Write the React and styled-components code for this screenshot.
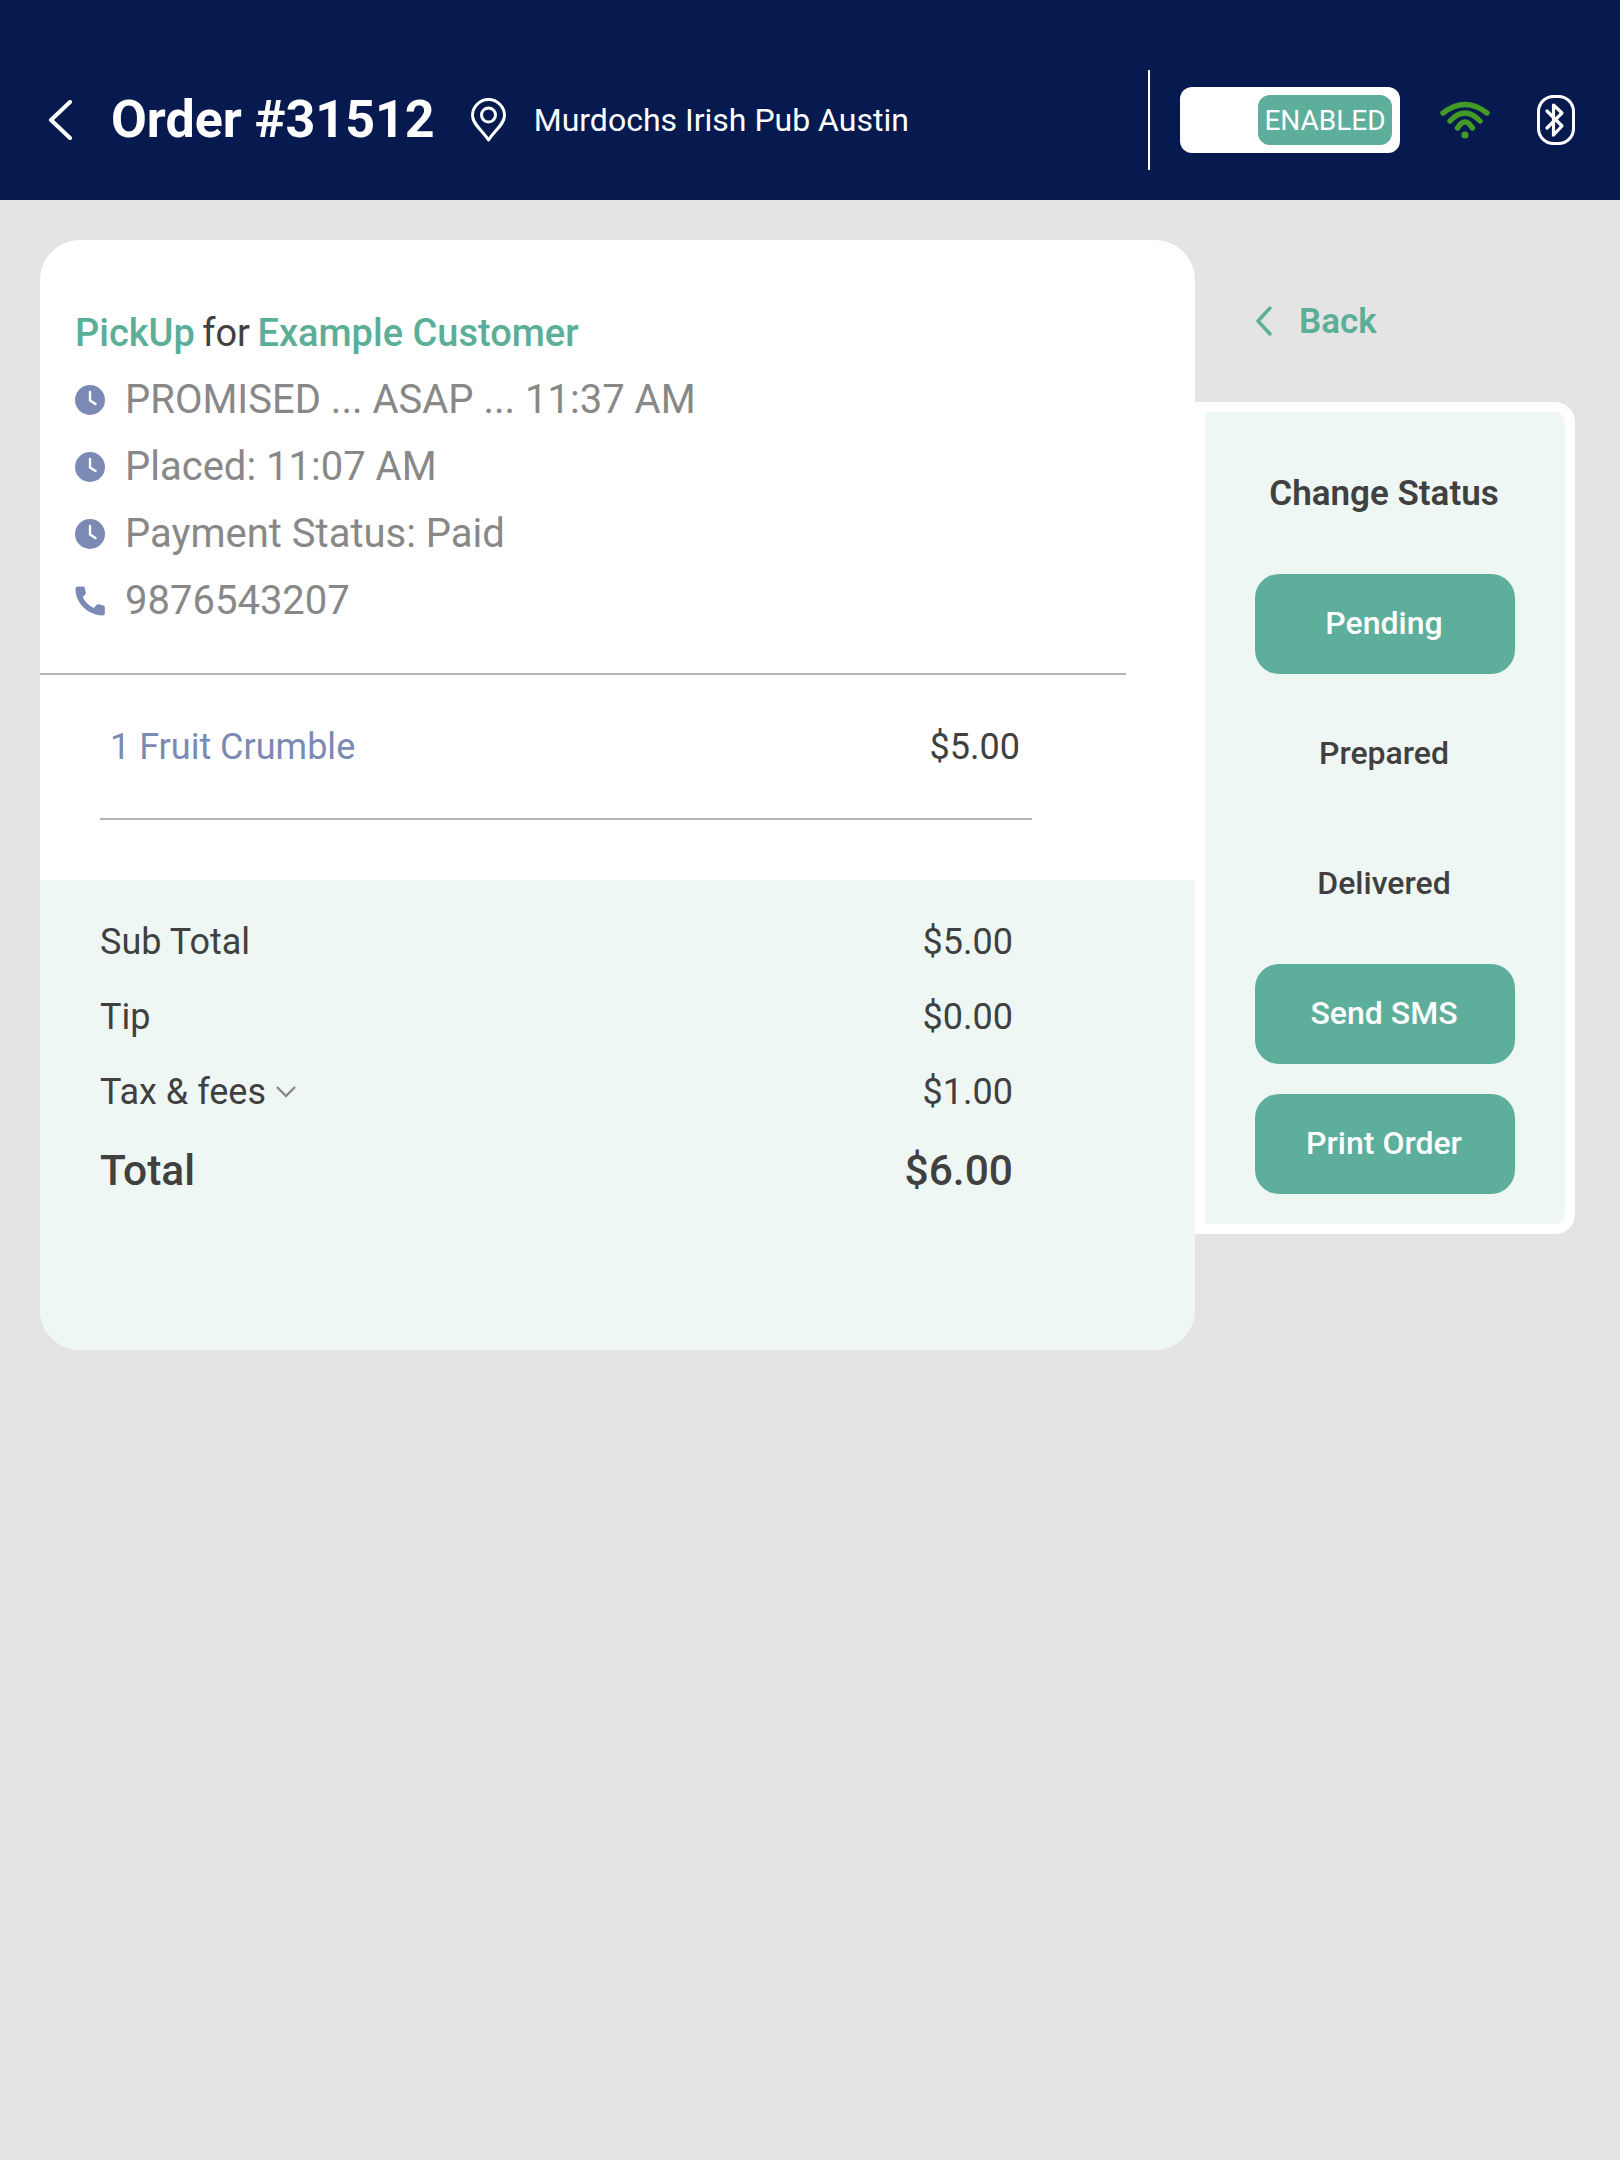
import React from "react";
import styled, { createGlobalStyle } from "styled-components";

const GlobalStyle = createGlobalStyle`
  html, body {
    margin: 0;
    padding: 0;
    background: #e4e4e4;
    font-family: Roboto, "Liberation Sans", sans-serif;
  }
  * {
    box-sizing: border-box;
  }
`;

const Page = styled.div`
  width: 1620px;
  min-height: 2160px;
  background: #e4e4e4;
`;

// Header
const Header = styled.header`
  height: 200px;
  background: #061a4f;
  color: #fff;
  display: flex;
  align-items: flex-end;
  padding: 0 45px 30px 48px;
`;

const HeaderLeft = styled.div`
  flex: 1;
  height: 100px;
  display: flex;
  align-items: center;
`;

const BackArrow = styled.svg`
  width: 26px;
  height: 40px;
  margin-right: 37px;
`;

const Title = styled.h1`
  margin: 0 36px 0 0;
  font-size: 52px;
  font-weight: 700;
  line-height: 1;
`;

const Pin = styled.svg`
  width: 35px;
  height: 44px;
  margin-right: 28px;
`;

const Location = styled.span`
  font-size: 32px;
  font-weight: 400;
`;

const HeaderRight = styled.div`
  height: 100px;
  display: flex;
  align-items: center;
  border-left: 2px solid #fff;
  padding-left: 30px;
`;

const Toggle = styled.div`
  width: 220px;
  height: 66px;
  background: #fff;
  border-radius: 12px;
  display: flex;
  align-items: center;
  justify-content: flex-end;
  padding-right: 8px;
  margin-right: 40px;
`;

const ToggleLabel = styled.div`
  width: 134px;
  height: 50px;
  background: #5dae9b;
  border-radius: 12px;
  color: #fff;
  font-size: 28px;
  font-weight: 400;
  display: flex;
  align-items: center;
  justify-content: center;
`;

const Wifi = styled.svg`
  width: 50px;
  height: 38px;
  margin-right: 47px;
`;

const Bluetooth = styled.svg`
  width: 38px;
  height: 50px;
`;

// Body
const Content = styled.main`
  display: flex;
  align-items: flex-start;
  padding: 40px 0 0 40px;
`;

const OrderCard = styled.section`
  width: 1155px;
  height: 1110px;
  background: #fff;
  border-radius: 40px;
  overflow: hidden;
  display: flex;
  flex-direction: column;
`;

const InfoBlock = styled.div`
  padding: 59px 0 39px 35px;
  width: 1086px;
  border-bottom: 2px solid #b4b4b4;
`;

const InfoLine = styled.div`
  height: 67px;
  display: flex;
  align-items: center;
  gap: 20px;
  font-size: 40px;
  color: #888;
`;

const NameLine = styled.div`
  height: 67px;
  display: flex;
  align-items: center;
  font-size: 38px;
  font-weight: 500;
  color: #404040;
  white-space: pre;
`;

const Accent = styled.span`
  color: #5bae98;
`;

const Plain = styled.span`
  font-weight: 400;
  word-spacing: -2px;
`;

const IconSlot = styled.span`
  width: 30px;
  height: 30px;
  display: flex;
`;

const ItemList = styled.div`
  flex: 1;
  padding: 0 175px 0 60px;
`;

const ItemRow = styled.div`
  height: 145px;
  display: flex;
  align-items: center;
  justify-content: space-between;
  padding: 0 12px 0 10px;
  margin-right: -12px;
  border-bottom: 2px solid #b4b4b4;
  font-size: 36px;
  color: #404040;
`;

const ItemName = styled.span`
  color: #7b8ab5;
`;

const Totals = styled.div`
  height: 470px;
  background: #eff7f4;
  padding: 24px 182px 0 60px;
  color: #404040;
`;

const TotalRow = styled.div`
  height: ${(p) => (p.$big ? "83px" : "75px")};
  display: flex;
  align-items: center;
  justify-content: space-between;
  font-size: ${(p) => (p.$big ? "42.5px" : "36px")};
  font-weight: ${(p) => (p.$big ? 500 : 400)};
`;

const TotalLabel = styled.span`
  display: flex;
  align-items: center;
  gap: 9px;
`;

const Caret = styled.svg`
  width: 22px;
  height: 14px;
`;

// Side panel
const Side = styled.aside`
  width: 380px;
  display: flex;
  flex-direction: column;
`;

const BackLink = styled.div`
  height: 162px;
  padding-left: 61px;
  display: flex;
  align-items: center;
  gap: 27px;
  color: #5bae98;
  font-size: 35px;
  font-weight: 600;
`;

const BackChevron = styled.svg`
  width: 16px;
  height: 30px;
`;

const StatusPanel = styled.div`
  background: #eff7f4;
  border: 10px solid #fff;
  border-radius: 0 20px 20px 0;
  height: 832px;
  padding: 0 50px;
  display: flex;
  flex-direction: column;
  gap: 30px;
`;

const StatusTitle = styled.h2`
  margin: 0 2px 0 0;
  height: 132px;
  padding-top: 30px;
  display: flex;
  align-items: center;
  justify-content: center;
  font-size: 35px;
  font-weight: 600;
  color: #404040;
`;

const StatusButton = styled.button`
  width: 260px;
  height: 100px;
  flex: none;
  border: 0;
  border-radius: 24px;
  padding: 0 2px 2px 0;
  background: ${(p) => (p.$active ? "#5dae9b" : "transparent")};
  color: ${(p) => (p.$active ? "#fff" : "#404040")};
  font-family: inherit;
  font-size: 32px;
  font-weight: 500;
`;

const ClockIcon = () => (
  <svg viewBox="0 0 30 30" width="30" height="30">
    <circle cx="15" cy="15" r="15" fill="#7b8ab5" />
    <path d="M15 7v8.5l5.5 3.5" fill="none" stroke="#fff" strokeWidth="2.4" strokeLinecap="round" strokeLinejoin="round" />
  </svg>
);

const PhoneIcon = () => (
  <svg viewBox="0 0 30 30" width="30" height="30">
    <path
      d="M3 .5h5c1 0 1.6.6 1.8 1.4l1 4.6c.2.9-.1 1.6-.8 2.2L7.8 11c1.8 4.4 6 8.6 11 11l2.6-3c.7-.7 1.4-1 2.4-.8l4.6 1.2c.9.2 1.4.8 1.4 1.8v6c0 1-.8 2.5-2.5 2.3C13 28.5 1 18 .5 3.5.5 1.5 1.5.5 3 .5z"
      fill="#7b8ab5"
    />
  </svg>
);

const infoLines = ["PROMISED ... ASAP ... 11:37 AM", "Placed: 11:07 AM", "Payment Status: Paid"];

const App = () => {
  return (
    <Page>
      <GlobalStyle />
      <Header>
        <HeaderLeft>
          <BackArrow viewBox="0 0 26 40">
            <path d="M22 2L3 20l19 18" fill="none" stroke="#fff" strokeWidth="4" strokeLinecap="round" strokeLinejoin="round" />
          </BackArrow>
          <Title>Order #31512</Title>
          <Pin viewBox="0 0 35 44">
            <path d="M17.5 42C11 32 1.5 26 1.5 17.5a16 16 0 0 1 32 0C33.5 26 24 32 17.5 42z" fill="none" stroke="#fff" strokeWidth="3" strokeLinejoin="round" />
            <circle cx="17.5" cy="17" r="7" fill="none" stroke="#fff" strokeWidth="3" />
          </Pin>
          <Location>Murdochs Irish Pub Austin</Location>
        </HeaderLeft>
        <HeaderRight>
          <Toggle>
            <ToggleLabel>ENABLED</ToggleLabel>
          </Toggle>
          <Wifi viewBox="0 0 50 38">
            <g fill="none" stroke="#439a25" strokeWidth="5.4" strokeLinecap="round">
              <path d="M3 12Q25 -5 47 12" />
              <path d="M10 20Q25 4 40 20" />
              <path d="M17.5 27Q25 15 32.5 27" />
            </g>
            <circle cx="25" cy="34" r="3.6" fill="#439a25" />
          </Wifi>
          <Bluetooth viewBox="0 0 38 50">
            <rect x="1.5" y="1.5" width="35" height="47" rx="15" fill="none" stroke="#fff" strokeWidth="3" />
            <path d="M10 16l15 15-8.5 9V10l8.5 8-15 15" fill="none" stroke="#fff" strokeWidth="3.2" strokeLinejoin="round" strokeLinecap="round" />
          </Bluetooth>
        </HeaderRight>
      </Header>
      <Content>
        <OrderCard>
          <InfoBlock>
            <NameLine>
              <Accent>PickUp</Accent>
              <Plain> for </Plain>
              <Accent>Example Customer</Accent>
            </NameLine>
            {infoLines.map((line) => (
              <InfoLine key={line}>
                <IconSlot>
                  <ClockIcon />
                </IconSlot>
                {line}
              </InfoLine>
            ))}
            <InfoLine>
              <IconSlot>
                <PhoneIcon />
              </IconSlot>
              9876543207
            </InfoLine>
          </InfoBlock>
          <ItemList>
            <ItemRow>
              <ItemName>1 Fruit Crumble</ItemName>
              <span>$5.00</span>
            </ItemRow>
          </ItemList>
          <Totals>
            <TotalRow>
              <span>Sub Total</span>
              <span>$5.00</span>
            </TotalRow>
            <TotalRow>
              <span>Tip</span>
              <span>$0.00</span>
            </TotalRow>
            <TotalRow>
              <TotalLabel>
                Tax &amp; fees
                <Caret viewBox="0 0 22 14">
                  <path d="M2 2l9 9 9-9" fill="none" stroke="#888" strokeWidth="2.4" />
                </Caret>
              </TotalLabel>
              <span>$1.00</span>
            </TotalRow>
            <TotalRow $big>
              <span>Total</span>
              <span>$6.00</span>
            </TotalRow>
          </Totals>
        </OrderCard>
        <Side>
          <BackLink>
            <BackChevron viewBox="0 0 16 30">
              <path d="M14 2L2 15l12 13" fill="none" stroke="#5bae98" strokeWidth="3.4" strokeLinecap="round" strokeLinejoin="round" />
            </BackChevron>
            Back
          </BackLink>
          <StatusPanel>
            <StatusTitle>Change Status</StatusTitle>
            <StatusButton $active>Pending</StatusButton>
            <StatusButton>Prepared</StatusButton>
            <StatusButton>Delivered</StatusButton>
            <StatusButton $active>Send SMS</StatusButton>
            <StatusButton $active>Print Order</StatusButton>
          </StatusPanel>
        </Side>
      </Content>
    </Page>
  );
};

export default App;
